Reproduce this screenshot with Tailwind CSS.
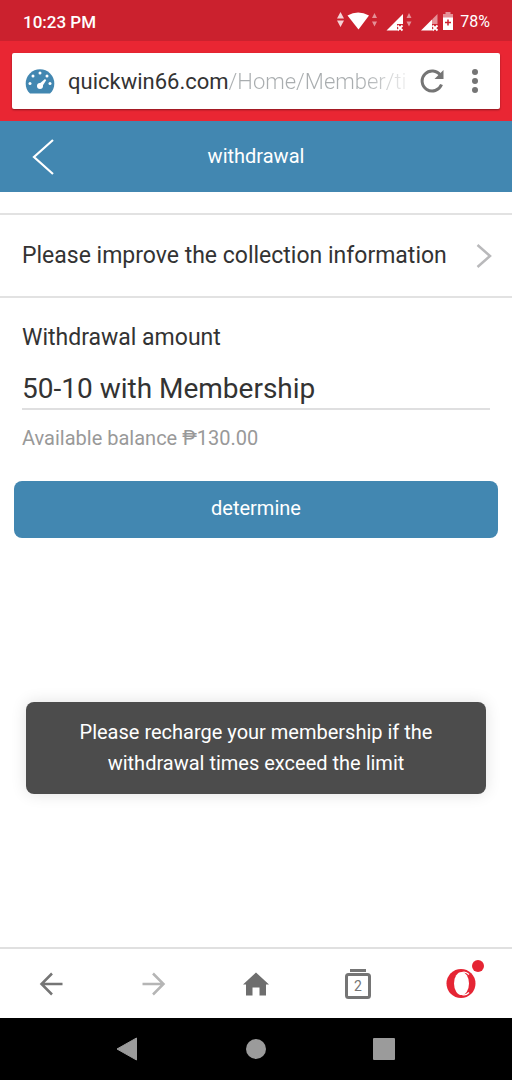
<!DOCTYPE html>
<html lang="en">
<head>
<meta charset="utf-8">
<meta name="viewport" content="width=device-width, initial-scale=1">
<title>withdrawal</title>
<script src="https://cdn.jsdelivr.net/npm/@tailwindcss/browser@4"></script>
</head>
<body class="flex min-h-screen flex-col bg-white font-[Roboto,'Noto_Sans',sans-serif] text-[#333]">
  <!-- System status bar -->
  <div class="flex h-[41px] items-center justify-between bg-[#cb212e] pt-0.5 pr-[22px] pl-[23px] text-white">
    <time class="text-[17px] leading-6 font-medium">10:23 PM</time>
    <div class="flex items-center gap-[5px]">
      <svg class="h-6 w-[120px]" viewBox="335 9 120 24" fill="#fff" aria-hidden="true">
        <path d="M340.500 11l3.500 6.500h-7zM340.500 26l3.500-6.500h-7z" opacity=".8"/>
        <path d="M347.500 14.500q10.500-6 21.500 0L358.500 28.500z"/>
        <path d="M374.500 12l2.500 5h-5zM374.500 25.500l2.500-5h-5z" opacity=".5"/>
        <path d="M386.500 29.500L403 13v10h-6v6.500z"/>
        <path d="M397.500 24.500l5 5m0-5l-5 5" stroke="#fff" stroke-width="1.800"/>
        <path d="M409 12l2.500 5h-5zM409 25.500l2.500-5h-5z" opacity=".5"/>
        <path d="M421 29.500L432 18.500v11z"/>
        <path d="M432 18.500l5.500-5.500v10h-5.500z" opacity=".5"/>
        <path d="M432.500 24.500l5 5m0-5l-5 5" stroke="#fff" stroke-width="1.800"/>
        <path d="M443 13h2.500v-2h5v2h2.500v4h-10z" opacity=".5"/>
        <path d="M443 16.500h10v12.500h-10z"/>
        <path d="M448 18.500v6m-3-3h6" stroke="#cb212e" stroke-width="1.500"/>
      </svg>
      <span class="text-base leading-6">78%</span>
    </div>
  </div>

  <!-- Browser address bar -->
  <header class="bg-[#e92633] px-3 pt-3 pb-3">
    <div class="flex h-14 items-center rounded-xs bg-white pr-4 pl-[13px] shadow-[0_1px_2px_rgba(0,0,0,0.4)]">
      <svg class="h-[26px] w-[30px] shrink-0" viewBox="0 0 30 26" aria-hidden="true">
        <path d="M5 25.500C2 23 .700 19.500 .700 15.500a14.300 14.300 0 0 1 28.600 0c0 4-1.300 7.500-4.300 10z" fill="#4287b1"/>
        <g fill="#fff"><circle cx="5" cy="15.500" r="1.500"/><circle cx="8" cy="8" r="1.500"/><circle cx="15" cy="5" r="1.500"/><circle cx="22" cy="8" r="1.500"/><circle cx="25" cy="15.500" r="1.500"/><circle cx="15" cy="18" r="3"/><path d="M13.500 16.500L20 11l1.200 1.200L16.500 19.500z"/></g>
      </svg>
      <button type="button" class="ml-[13px] min-w-0 flex-1 pt-0.5 text-left text-[22px] leading-8 whitespace-nowrap text-[#333]" aria-label="Address">quickwin66.com<span class="bg-linear-to-r from-[#a9adaf] from-75% to-[#eeeeee] bg-clip-text font-light text-transparent">/Home/Member/ti</span></button>
      <button type="button" class="ml-5 shrink-0" aria-label="Reload">
        <svg class="size-6" viewBox="0 0 24 24" fill="none" aria-hidden="true">
          <path d="M20.500 6.500A10 10 0 1 0 21.500 15.500" stroke="#757575" stroke-width="3"/>
          <path d="M23.500 1v9h-9z" fill="#757575"/>
        </svg>
      </button>
      <button type="button" class="ml-[22px] shrink-0" aria-label="Menu">
        <svg class="h-6 w-[18px]" viewBox="0 0 18 24" fill="#757575" aria-hidden="true"><circle cx="9" cy="3" r="3"/><circle cx="9" cy="12" r="3"/><circle cx="9" cy="21" r="3"/></svg>
      </button>
    </div>
  </header>

  <!-- Page title bar -->
  <div class="grid h-[71px] grid-cols-[80px_1fr_80px] items-center bg-[#4287b1] text-white">
    <button type="button" class="ml-8 justify-self-start" aria-label="Back">
      <svg class="h-9 w-[22px]" viewBox="0 0 22 36" fill="none" stroke="#fff" stroke-width="2.200" aria-hidden="true"><path d="M21 1L2 18l19 17"/></svg>
    </button>
    <h1 class="pb-0.5 text-center text-xl leading-7">withdrawal</h1>
  </div>

  <main class="relative flex-1">
    <a href="#collection" class="mt-[21px] flex h-[85px] items-center justify-between border-y-2 border-[#e2e2e2] pr-5 pl-[22px]">
      <span class="text-[23px] leading-8">Please improve the collection information</span>
      <svg class="h-6 w-4 shrink-0" viewBox="0 0 16 24" fill="none" stroke="#b9b9bb" stroke-width="2.500" aria-hidden="true"><path d="M1.500 1L14 12L1.500 23"/></svg>
    </a>

    <form class="pt-6">
      <div class="px-[22px]">
        <label for="amount" class="block text-[23px] leading-8">Withdrawal amount</label>
        <input id="amount" type="text" value="50-10 with Membership" class="mt-3 block h-11 w-full border-b-2 border-[#dfdfe0] bg-transparent pt-0.5 text-[28px] leading-9 outline-none">
        <p class="mt-3 text-xl leading-8 text-[#999]">Available balance ₱130.00</p>
      </div>
      <div class="mt-[27px] px-3.5">
        <button type="submit" class="h-[57px] w-full rounded-lg bg-[#4287b1] pb-1 text-xl text-white">determine</button>
      </div>
    </form>

    <div role="status" class="absolute inset-x-[26px] bottom-[153px] rounded-lg bg-[#4c4c4c] px-10 py-[15px] text-center text-xl leading-[31px] text-white shadow-[0_0_16px_rgba(0,0,0,0.12)]">Please recharge your membership if the withdrawal times exceed the limit</div>
  </main>

  <!-- Browser toolbar -->
  <nav class="grid h-[71px] grid-cols-5 items-center justify-items-center border-t-2 border-[#e0e0e0] text-[#757575]" aria-label="Browser">
    <button type="button" aria-label="Back">
      <svg class="size-6" viewBox="0 0 24 24" fill="none" stroke="currentColor" stroke-width="2.500" aria-hidden="true"><path d="M23.500 12H2.500M13 1.500L2.500 12L13 22.500"/></svg>
    </button>
    <button type="button" class="text-[#b5b5b5]" aria-label="Forward">
      <svg class="size-6" viewBox="0 0 24 24" fill="none" stroke="currentColor" stroke-width="2.500" aria-hidden="true"><path d="M.500 12h21M11 1.500L21.500 12L11 22.500"/></svg>
    </button>
    <button type="button" aria-label="Home">
      <svg class="size-[26px]" viewBox="0 0 26 26" fill="#6e6e6e" aria-hidden="true"><path d="M13 1.500L26 13.500h-3V24.500h-6.500V16.500h-7v8H3V13.500H0z"/></svg>
    </button>
    <button type="button" aria-label="2 open tabs">
      <svg class="h-8 w-7" viewBox="0 0 28 32" fill="none" stroke="currentColor" aria-hidden="true">
        <path d="M6 2.500h16" stroke-width="3"/><rect x="2.500" y="6.500" width="23" height="23" rx="2" stroke-width="3"/>
        <text x="14" y="23" text-anchor="middle" font-size="14" fill="currentColor" stroke="none">2</text>
      </svg>
    </button>
    <button type="button" aria-label="Opera menu">
      <svg class="h-[60px] w-12" viewBox="437 954 48 60" fill="#e52534" aria-hidden="true">
        <circle cx="461" cy="983.500" r="14.500"/>
        <ellipse cx="461.500" cy="983.500" rx="7.500" ry="11.500" fill="#fff"/>
        <path d="M462 972.500q3.500-1.500 7 2M462 994.500q3.500 1.500 7-2" fill="none" stroke="#fff" stroke-width="1.200"/>
        <circle cx="478" cy="966" r="6"/>
      </svg>
    </button>
  </nav>

  <!-- System navigation -->
  <nav class="grid h-[62px] grid-cols-3 items-center justify-items-center bg-black px-[12.5%]" aria-label="System">
    <button type="button" aria-label="Back">
      <svg class="size-6" viewBox="0 0 24 24" aria-hidden="true"><path d="M20.500 1v22L1 12z" fill="#9b9b9b" stroke="#9b9b9b" stroke-linejoin="round"/></svg>
    </button>
    <button type="button" aria-label="Home">
      <svg class="size-6" viewBox="0 0 24 24" aria-hidden="true"><circle cx="12" cy="12" r="10" fill="#9b9b9b"/></svg>
    </button>
    <button type="button" aria-label="Recent apps">
      <svg class="size-6" viewBox="0 0 24 24" aria-hidden="true"><rect x="1" y="1" width="22" height="22" rx="1" fill="#9b9b9b"/></svg>
    </button>
  </nav>
</body>
</html>
